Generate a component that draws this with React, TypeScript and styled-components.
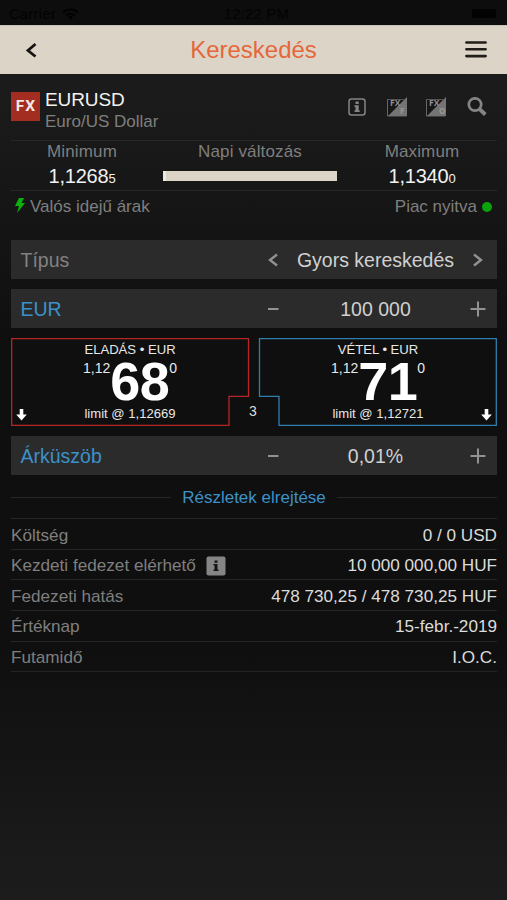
import React from "react";
import styled, { createGlobalStyle } from "styled-components";

const GlobalStyle = createGlobalStyle`
  * { box-sizing: border-box; }
  body { margin: 0; background: #1b1b1b; }
`;

const Screen = styled.div`
  width: 507px;
  height: 900px;
  display: flex;
  flex-direction: column;
  overflow: hidden;
  font-family: "Liberation Sans", Arial, sans-serif;
  font-size: 17px;
  color: #dcdcdc;
  white-space: nowrap;
  background: linear-gradient(#1c1c1c 75px, #0f0f0f 340px, #0f0f0f 650px, #1c1c1c 890px);
`;

const StatusBar = styled.div`
  height: 25px;
  flex: none;
  display: grid;
  grid-template-columns: 1fr auto 1fr;
  align-items: center;
  padding: 3px 11px 0 9px;
  background: #0d0d0d;
  color: #020202;
  font-size: 14.5px;
  letter-spacing: 0.4px;
`;

const Carrier = styled.div`
  display: flex;
  align-items: center;
  gap: 6px;
`;

const Clock = styled.span`
  padding-left: 8px;
`;

const Battery = styled.div`
  justify-self: end;
  width: 24px;
  height: 9px;
  margin-top: -2px;
  border-radius: 2px;
  background: #020202;
`;

const Header = styled.header`
  height: 49px;
  flex: none;
  display: grid;
  grid-template-columns: 62px 1fr 62px;
  align-items: center;
  justify-items: center;
  background: #dcd5c7;
  border-top: 1px solid #c9c3b7;
`;

const Title = styled.h1`
  margin: 0;
  font-size: 24px;
  font-weight: 400;
  line-height: 48px;
  color: #e5673a;
`;

const Content = styled.main`
  padding: 0 10px 0 11px;
`;

const Instrument = styled.section`
  height: 66px;
  display: flex;
  align-items: flex-start;
  padding-top: 14px;
`;

const Badge = styled.div`
  width: 29px;
  height: 29px;
  margin: 4px 5px 0 0;
  display: flex;
  align-items: center;
  justify-content: center;
  background: #a22d20;
  color: #f4e8e4;
  font: 700 15.5px/29px Roboto, sans-serif;
  letter-spacing: 1.2px;
  padding-left: 1px;
`;

const Symbol = styled.div`
  font-size: 19px;
  line-height: 22px;
  padding-top: 1px;
  letter-spacing: -0.1px;
  color: #f2f2f2;
`;

const Muted = styled.div`
  line-height: 22px;
  color: #7f7f7f;
`;

const Tools = styled.div`
  margin-left: auto;
  display: flex;
  padding-top: 8px;
`;

const ToolButton = styled.div<{ $width: number }>`
  width: ${(p) => p.$width}px;
  height: 22px;
  display: flex;
  align-items: center;
  justify-content: center;
`;

const Range = styled.section`
  height: 51px;
  display: grid;
  grid-template-columns: 142px 1fr 150px;
  justify-items: center;
  border: solid #272727;
  border-width: 1px 0;
`;

const RangeColumn = styled.div`
  display: flex;
  flex-direction: column;
  align-items: center;
`;

const RangeLabel = styled(Muted)`
  letter-spacing: 0.15px;
`;

const Rate = styled.div`
  font-size: 20px;
  line-height: 27px;
  letter-spacing: -0.2px;
  color: #f2f2f2;
  small { font-size: 13px; }
`;

const RangeBar = styled.div`
  width: 174px;
  height: 10px;
  margin-top: 8px;
  background: #dcd5c7;
  border-left: 3px solid #eee9df;
`;

const MarketStatus = styled.section`
  height: 49px;
  display: flex;
  justify-content: space-between;
  padding: 5px 5px 0 4px;
`;

const StatusItem = styled.div`
  height: 22px;
  display: flex;
  align-items: center;
  gap: 5px;
  color: #7f7f7f;
`;

const Bolt = styled.svg`
  margin-top: -3px;
`;

const OpenDot = styled.span`
  width: 10px;
  height: 10px;
  border-radius: 50%;
  background: #0ba30b;
`;

const Field = styled.div`
  height: 39px;
  display: grid;
  grid-template-columns: 243px 38px 1fr 38px;
  align-items: center;
  justify-items: center;
  background: #2b2b2b;
  font-size: 19.5px;
  line-height: 37px;
  color: #d0d0d0;
`;

const FieldValue = styled.span`
  padding-top: 2px;
`;

const FieldLabel = styled(FieldValue)<{ $active?: boolean }>`
  justify-self: start;
  padding-left: 9.5px;
  color: ${(p) => (p.$active ? "#3c91c8" : "#828282")};
`;

const Fields = styled.div`
  display: flex;
  flex-direction: column;
  gap: 10px;
`;

const Quotes = styled.section`
  position: relative;
  height: 88px;
  margin: 10px 0;
  display: grid;
  grid-template-columns: 238px 238px;
  gap: 10px;
`;

const Outlines = styled.svg`
  position: absolute;
  inset: 0;
`;

const Quote = styled.div`
  position: relative;
  display: flex;
  flex-direction: column;
  align-items: center;
  color: #e8e8e8;
  font-size: 13.1px;
  line-height: 16px;
  padding-top: 4px;
`;

const QuotePrice = styled.div`
  height: 47px;
  display: flex;
  align-items: flex-start;
  font-size: 14px;
  line-height: 20px;
  strong {
    font-size: 54px;
    line-height: 46px;
    letter-spacing: -0.6px;
    color: #fff;
  }
`;

const LimitText = styled.span`
  padding-top: 1px;
`;

const Trend = styled.svg<{ $side: "left" | "right" }>`
  position: absolute;
  bottom: 5px;
  ${(p) => p.$side}: 5px;
`;

const Lots = styled.span`
  position: absolute;
  left: 238px;
  top: 64px;
  width: 9px;
  font-size: 14px;
  line-height: 18px;
`;

const Toggle = styled.div`
  height: 44px;
  padding-top: 2px;
  display: flex;
  align-items: center;
  gap: 11px;
  color: #3c91c8;
  border-bottom: 1px solid #242424;
  &::before, &::after {
    content: "";
    flex: 1;
    height: 1px;
    background: #262626;
  }
`;

const DetailRow = styled.div`
  height: 30.65px;
  display: flex;
  align-items: center;
  justify-content: space-between;
  border-bottom: 1px solid #242424;
  font-size: 17.15px;
  padding-top: 2.5px;
`;

const DetailLabel = styled.span`
  display: flex;
  align-items: center;
  gap: 10px;
  color: #7f7f7f;
`;

const Chevron = ({ back }: { back?: boolean }) => (
  <svg width="12" height="14" viewBox="0 0 12 14" fill="none" stroke="#929292" strokeWidth="2.4">
    <path d={back ? "M10 1.500 3 7l7 5.500" : "M2 1.500 9 7l-7 5.500"} />
  </svg>
);

const Sign = ({ plus }: { plus?: boolean }) => (
  <svg width="16" height="16" viewBox="0 0 16 16" stroke="#929292" strokeWidth="2">
    <path d={plus ? "M0.500 8h15M8 0.500v15" : "M3 8h10.500"} />
  </svg>
);

const FxTool = ({ mark }: { mark: string }) => (
  <svg width="21" height="20" viewBox="0 0 21 20">
    <path d="M.5 2v17h19V1" fill="#171717" stroke="#666" />
    <path d="M1 19 20 0v19z" fill="#747474" />
    <path d="M.5 2.500H17" stroke="#555" />
    <text x="3" y="8.500" fill="#909090" fontSize="8.500" fontWeight="700" fontFamily="Open Sans">FX</text>
    <text x="13" y="16.500" fill="#999" fontSize="8" fontWeight="700" fontFamily="Open Sans">{mark}</text>
  </svg>
);

const DownArrow = ({ side }: { side: "left" | "right" }) => (
  <Trend $side={side} width="11" height="12" viewBox="0 0 11 12">
    <path d="M3.700 0h3.600v5.500h3.500L5.500 11.500.2 5.500h3.500z" fill="#fff" />
  </Trend>
);

const InfoGlyph = styled.path`
  fill: ${(p) => p.color};
`;

const details = [
  { label: "Költség", value: "0 / 0 USD" },
  { label: "Kezdeti fedezet elérhető", value: "10 000 000,00 HUF", info: true },
  { label: "Fedezeti hatás", value: "478 730,25 / 478 730,25 HUF" },
  { label: "Értéknap", value: "15-febr.-2019" },
  { label: "Futamidő", value: "I.O.C." },
];

export default function App() {
  return (
    <Screen>
      <GlobalStyle />
      <StatusBar>
        <Carrier>
          Carrier
          <svg width="17" height="12" viewBox="0 0 17 12" fill="none" stroke="#020202" strokeWidth="2">
            <path d="M1 4.500a11 11 0 0 1 15 0M4 7.500a7 7 0 0 1 9 0" />
            <path d="m6 9 2.500 3L11 9a4 4 0 0 0-5 0z" fill="#020202" stroke="none" />
          </svg>
        </Carrier>
        <Clock>12:22 PM</Clock>
        <Battery />
      </StatusBar>
      <Header>
        <svg width="12" height="16" viewBox="0 0 12 16" fill="none" stroke="#171411" strokeWidth="2.8">
          <path d="M10.500 2 3 8.500l7.500 6" />
        </svg>
        <Title>Kereskedés</Title>
        <svg width="22" height="18" viewBox="0 0 22 18" stroke="#211d19" strokeWidth="2.600" strokeLinecap="round">
          <path d="M1.400 1.500h19.200M1.400 8.300h19.200M1.400 15.100h19.200" />
        </svg>
      </Header>
      <Content>
        <Instrument>
          <Badge>FX</Badge>
          <div>
            <Symbol>EURUSD</Symbol>
            <Muted>Euro/US Dollar</Muted>
          </div>
          <Tools>
            <ToolButton $width={41}>
              <svg width="18" height="18" viewBox="0 0 18 18">
                <rect x="1" y="1" width="16" height="16" rx="2.500" fill="none" stroke="#858585" strokeWidth="1.500" />
                <InfoGlyph color="#858585" d="M7.500 3.500h3.200v2.500H7.500zM6.500 7.200h4.200V12.200h1v1.800h-5.200v-1.800h1V9h-1z" />
              </svg>
            </ToolButton>
            <ToolButton $width={40}><FxTool mark="F" /></ToolButton>
            <ToolButton $width={39}><FxTool mark="O" /></ToolButton>
            <ToolButton $width={41}>
              <svg width="20" height="20" viewBox="0 0 20 20" fill="none" stroke="#858585">
                <circle cx="8" cy="7.500" r="6.200" strokeWidth="2.700" />
                <path d="m12.600 12.100 5.700 5.400" strokeWidth="3.900" />
              </svg>
            </ToolButton>
          </Tools>
        </Instrument>
        <Range>
          <RangeColumn>
            <RangeLabel>Minimum</RangeLabel>
            <Rate>1,1268<small>5</small></Rate>
          </RangeColumn>
          <RangeColumn>
            <RangeLabel>Napi változás</RangeLabel>
            <RangeBar />
          </RangeColumn>
          <RangeColumn>
            <RangeLabel>Maximum</RangeLabel>
            <Rate>1,1340<small>0</small></Rate>
          </RangeColumn>
        </Range>
        <MarketStatus>
          <StatusItem>
            <Bolt width="10" height="15" viewBox="0 0 10 15" fill="#0bb00b">
              <path d="M4 0h5L6.500 5H10L2 15l2-7H0z" />
            </Bolt>
            Valós idejű árak
          </StatusItem>
          <StatusItem>Piac nyitva<OpenDot /></StatusItem>
        </MarketStatus>
        <Fields>
          <Field>
            <FieldLabel>Típus</FieldLabel>
            <Chevron back />
            <FieldValue>Gyors kereskedés</FieldValue>
            <Chevron />
          </Field>
          <Field>
            <FieldLabel $active>EUR</FieldLabel>
            <Sign />
            <FieldValue>100 000</FieldValue>
            <Sign plus />
          </Field>
        </Fields>
        <Quotes>
          <Outlines width="486" height="88" viewBox="0 0 486 88" fill="none" strokeWidth="1.300">
            <path d="M.7.7H237.500V58.300H218V87.300H.7z" stroke="#b62626" />
            <path d="M248.500.7H485.300V87.300H268V58.300H248.500z" stroke="#2f7fae" />
          </Outlines>
          <Quote>
            <span>ELADÁS • EUR</span>
            <QuotePrice>1,12<strong>68</strong>0</QuotePrice>
            <LimitText>limit @ 1,12669</LimitText>
            <DownArrow side="left" />
          </Quote>
          <Quote>
            <span>VÉTEL • EUR</span>
            <QuotePrice>1,12<strong>71</strong>0</QuotePrice>
            <LimitText>limit @ 1,12721</LimitText>
            <DownArrow side="right" />
          </Quote>
          <Lots>3</Lots>
        </Quotes>
        <Field>
          <FieldLabel $active>Árküszöb</FieldLabel>
          <Sign />
          <FieldValue>0,01%</FieldValue>
          <Sign plus />
        </Field>
        <Toggle>Részletek elrejtése</Toggle>
        {details.map((row) => (
          <DetailRow key={row.label}>
            <DetailLabel>
              {row.label}
              {row.info && (
                <svg width="20" height="20" viewBox="0 0 20 20">
                  <rect x=".5" y=".5" width="19" height="19" rx="2" fill="#858585" />
                  <InfoGlyph color="#141414" d="M8.500 4.500h3v2.200h-3zM7.500 8h4v5.500h1V15h-5v-1.500h1v-4h-1z" />
                </svg>
              )}
            </DetailLabel>
            <span>{row.value}</span>
          </DetailRow>
        ))}
      </Content>
    </Screen>
  );
}
